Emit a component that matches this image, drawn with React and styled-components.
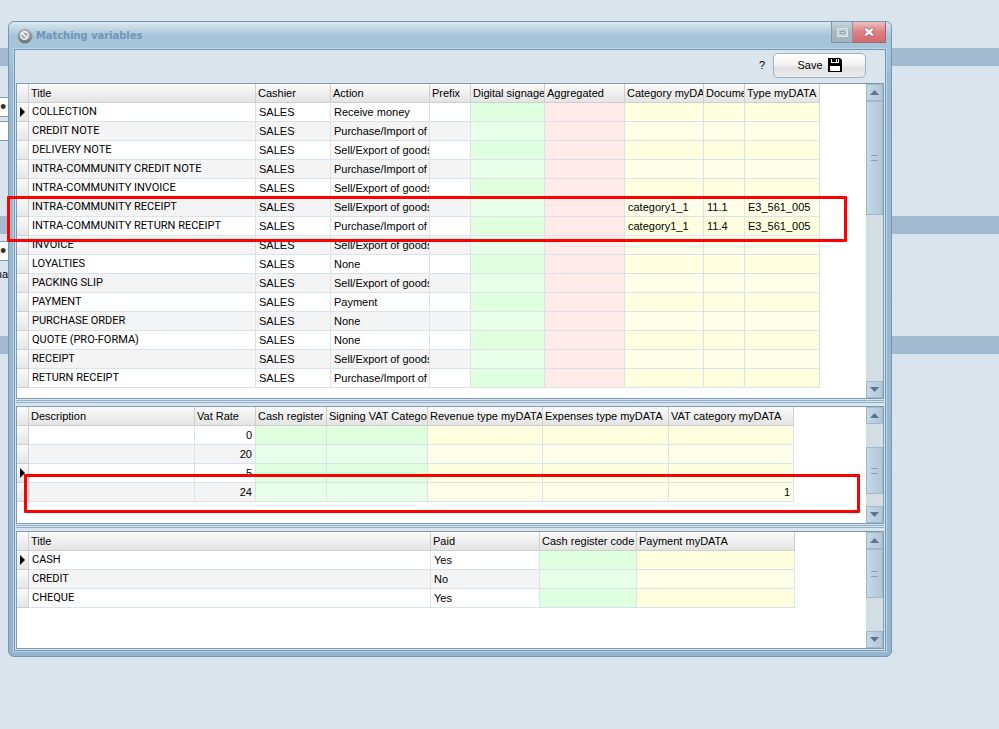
import { memo } from "react";
import styled, { createGlobalStyle, css } from "styled-components";

const c = {
  font: `"Liberation Sans", Arial, sans-serif`,
  font_title: `"DejaVu Sans Condensed", "DejaVu Sans", sans-serif`,
  font_caps: `Roboto, "Liberation Sans", sans-serif`,
  clr_page: "#dae4ec",
  clr_band: "#a2bbd1",
  clr_frame: "#9abad3",
  clr_line: "#7596b5",
  clr_pane: "#7f9cb3",
  clr_grid: "#d9e3ec",
  clr_mark: "#ff0000",
};

const tints = {
  plain: ["#ffffff", "#f4f4f4"],
  green: ["#dfffdf", "#e8ffe9"],
  red: ["#ffeaea", "#ffeaea"],
  yellow: ["#ffffdf", "#ffffe9"],
};

const GlobalStyle = createGlobalStyle`
  * {
    box-sizing: border-box;
  }

  body {
    margin: 0;
    font-family: ${c.font};
    font-size: 11px;
    line-height: 18px;
    color: #000;
    background-color: ${c.clr_page};
  }
`;

const Page = styled.div`
  display: grid;
  grid-template-columns: minmax(0, 1fr);
  min-height: 100vh;
  overflow: hidden;

  > * {
    grid-area: 1 / 1;
  }
`;

const Backdrop = styled.div`
  padding: 48px 0 0 0;
`;

const Band = styled.div`
  height: 18px;
  background-color: ${c.clr_band};
`;

const BackForm = styled.div`
  display: flex;
  flex-direction: column;
  align-items: flex-start;
  gap: 4px;
  height: ${props => props.$height}px;
  padding: ${props => props.$top}px 0 0 0;
`;

const BackInput = styled.input`
  width: 12px;
  height: 20px;
  padding: 0;
  font-family: ${c.font};
  font-size: 18px;
  color: #333;
  background-color: #fff;
  border: 1px solid ${c.clr_pane};
  border-left: none;
`;

const BackLabel = styled.span`
  display: flex;
  justify-content: flex-end;
  width: 8px;
  overflow: hidden;
`;

const Window = styled.section`
  align-self: start;
  margin: 21px 107px 0 8px;
  padding: 0 5px 5px 5px;
  background: linear-gradient(#dbe8ef 0, #a6c4d9 14px, #a4c6da 28px, ${c.clr_frame} 60px, #93b4cd 100%);
  border: 1px solid ${c.clr_line};
  border-radius: 6px;
`;

const TitleBar = styled.header`
  display: flex;
  align-items: center;
  gap: 3px;
  height: 27px;
  padding: 0 0 0 3px;

  h1 {
    margin: 0;
    font-family: ${c.font_title};
    font-size: 11px;
    font-weight: bold;
    color: #6f96ba;
  }
`;

const WindowButtons = styled.div`
  display: flex;
  align-self: flex-start;
  margin: 0 0 0 auto;
`;

const WindowButton = styled.button`
  display: flex;
  align-items: center;
  justify-content: center;
  width: 22px;
  height: 21px;
  padding: 0;
  background: linear-gradient(#c9d6dd, #a9b7bf 50%, #a4b4bc);
  border: 1px solid #8298a8;
  border-top: none;

  ${props => props.$close && css`
    width: 33px;
    background: linear-gradient(#eebfc1, #dc8082 50%, #d16a6d);
    border-color: #a8616a;
    border-left: none;
  `}
`;

const Client = styled.div`
  background-color: ${c.clr_page};
  border: 1px solid ${c.clr_line};
  outline: 1px solid #bcd3e3;
  padding: 0 1px 1px 1px;
`;

const Toolbar = styled.div`
  display: flex;
  align-items: center;
  justify-content: flex-end;
  gap: 8px;
  height: 33px;
  padding: 0 18px 3px 0;
`;

const HelpLink = styled.a`
  color: inherit;
  text-decoration: none;
`;

const SaveButton = styled.button`
  display: flex;
  align-items: center;
  justify-content: center;
  gap: 5px;
  width: 93px;
  height: 25px;
  padding: 0;
  font-family: ${c.font};
  font-size: 11px;
  background: linear-gradient(#fff 0, #f4f4f4 45%, #e0e0e0 60%, #ececec 100%);
  border: 1px solid #9bb3c6;
  border-radius: 5px;
`;

const Pane = styled.div`
  position: relative;
  display: flex;
  justify-content: space-between;
  height: ${props => props.$height}px;
  background-color: #fff;
  border: 1px solid ${c.clr_pane};
`;

const Splitter = styled.div`
  height: 7px;
  background: linear-gradient(
    #dae4ec 1px, #8fb0ca 1px 2px, #dae4ec 2px 3px, #8fb0ca 3px 4px, #dae4ec 4px
  );
`;

const Table = styled.table`
  align-self: flex-start;
  width: 0;
  table-layout: fixed;
  border-collapse: separate;
  border-spacing: 0;

  th,
  td {
    height: 19px;
    padding: 0 0 0 3px;
    overflow: hidden;
    white-space: nowrap;
    line-height: 18px;
    border-right: 1px solid ${c.clr_grid};
    border-bottom: 1px solid ${c.clr_grid};
  }

  thead th {
    padding: 0 0 0 2px;
    font-weight: normal;
    text-align: left;
    background: linear-gradient(#fafafa, #e4e4e4);
    border-color: #cfcfcf;
  }
`;

const Cell = styled.td`
  background-color: ${props => tints[props.$tint][props.$odd ? 1 : 0]};

  ${props => props.$caps && css`
    font-family: ${c.font_caps};
  `}

  ${props => props.$number && css`
    && {
      padding: 0 3px 0 0;
      text-align: right;
    }
  `}
`;

const Marker = styled.td`
  && {
    padding: 0 0 0 3px;
    background: linear-gradient(#fafafa, #e6e6e6);
    border-color: #cfcfcf;
  }

  svg {
    display: block;
  }
`;

const Scrollbar = styled.div`
  display: flex;
  flex-direction: column;
  width: 17px;
  background-color: #d3dee4;
`;

const ScrollButton = styled.button`
  display: flex;
  align-items: center;
  justify-content: center;
  flex: none;
  height: 17px;
  padding: 0;
  background: linear-gradient(to right, #c6d8e5, #afc8da);
  border: 1px solid #9fb9cb;
`;

const Thumb = styled.div`
  display: flex;
  align-items: center;
  justify-content: center;
  flex: none;
  height: ${props => props.$size}px;
  margin: ${props => props.$offset}px 0 auto 0;
  background: linear-gradient(to right, #c6d8e5, #afc8da);
  border: 1px solid #9fb9cb;

  &::before {
    content: "";
    width: 7px;
    height: 4px;
    border: solid #86a1b4;
    border-width: 1px 0;
  }
`;

const Highlight = styled.div`
  position: absolute;
  top: ${props => props.$top}px;
  right: ${props => props.$right}px;
  left: ${props => props.$left}px;
  height: ${props => props.$height}px;
  border: 3px solid ${c.clr_mark};
  border-radius: 1px;
  pointer-events: none;
`;

const BanIcon = () => (
  <svg width="16" height="16" viewBox="0 0 16 16" aria-hidden="true">
    <defs>
      <linearGradient id="ball" x1="0" y1="0" x2="0" y2="1">
        <stop offset="0" stopColor="#b5bbbd" />
        <stop offset="1" stopColor="#6c7476" />
      </linearGradient>
    </defs>
    <circle cx="8" cy="8" r="7.5" fill="url(#ball)" />
    <circle cx="7.5" cy="7.5" r="3.8" fill="#a4a9aa" stroke="#f4f4f4" strokeWidth="1.4" />
    <path d="M5 5l5 5" stroke="#f4f4f4" strokeWidth="1.6" />
  </svg>
);

const MaximizeIcon = () => (
  <svg width="11" height="9" viewBox="0 0 11 9" aria-hidden="true">
    <path d="M.5.5h10v8H.5z" fill="#c3ced4" stroke="#dfe7eb" />
    <path d="M3.5 3.5h4v2h-4z" fill="#dfe7eb" stroke="#8b9ba5" />
  </svg>
);

const CloseIcon = () => (
  <svg width="12" height="10" viewBox="0 0 12 10" aria-hidden="true">
    <path d="M1 1h3l2 2 2-2h3v1L8.500 5 11 8v1H8L6 7 4 9H1V8l2.500-3L1 2z" fill="#fff" stroke="#8d5560" strokeWidth=".7" />
  </svg>
);

const SaveIcon = () => (
  <svg width="14" height="14" viewBox="0 0 14 14" aria-hidden="true">
    <path d="M0 0h12l2 2v12H0z" fill="#000" />
    <path d="M3 1h8v4H3z" fill="#fff" />
    <path d="M4 0h4v4H4zM9 1h1v3H9z" fill="#000" />
    <path d="M2 8h10v5H2z" fill="#fff" />
  </svg>
);

const Arrow = ({ down }) => (
  <svg width="9" height="5" viewBox="0 0 9 5" aria-hidden="true">
    <path d={down ? "M0 0h9L4.500 5z" : "M0 5h9L4.500 0z"} fill="#5d7589" />
  </svg>
);

const RowArrow = () => (
  <svg width="5" height="10" viewBox="0 0 5 10" aria-label="Current row">
    <path d="M0 0l5 5-5 5z" fill="#000" />
  </svg>
);

const sell = "Sell/Export of goods";
const buy = "Purchase/Import of goods";

const documents = {
  name: "Documents",
  height: 316,
  scroll: { offset: 0, size: 114 },
  current: 0,
  columns: [
    { title: "Title", width: 227, caps: true },
    { title: "Cashier", width: 75 },
    { title: "Action", width: 99 },
    { title: "Prefix", width: 41 },
    { title: "Digital signage", width: 74, tint: "green" },
    { title: "Aggregated", width: 80, tint: "red" },
    { title: "Category myDATA", width: 79, tint: "yellow" },
    { title: "Document type", width: 41, tint: "yellow" },
    { title: "Type myDATA", width: 75, tint: "yellow" },
  ],
  rows: [
    ["COLLECTION", "SALES", "Receive money"],
    ["CREDIT NOTE", "SALES", buy],
    ["DELIVERY NOTE", "SALES", sell],
    ["INTRA-COMMUNITY CREDIT NOTE", "SALES", buy],
    ["INTRA-COMMUNITY INVOICE", "SALES", sell],
    ["INTRA-COMMUNITY RECEIPT", "SALES", sell, "", "", "", "category1_1", "11.1", "E3_561_005"],
    ["INTRA-COMMUNITY RETURN RECEIPT", "SALES", buy, "", "", "", "category1_1", "11.4", "E3_561_005"],
    ["INVOICE", "SALES", sell],
    ["LOYALTIES", "SALES", "None"],
    ["PACKING SLIP", "SALES", sell],
    ["PAYMENT", "SALES", "Payment"],
    ["PURCHASE ORDER", "SALES", "None"],
    ["QUOTE (PRO-FORMA)", "SALES", "None"],
    ["RECEIPT", "SALES", sell],
    ["RETURN RECEIPT", "SALES", buy],
  ],
};

const vatRates = {
  name: "VAT rates",
  height: 118,
  scroll: { offset: 23, size: 47 },
  current: 2,
  columns: [
    { title: "Description", width: 166 },
    { title: "Vat Rate", width: 61, number: true },
    { title: "Cash register", width: 71, tint: "green" },
    { title: "Signing VAT Category", width: 101, tint: "green" },
    { title: "Revenue type myDATA", width: 115, tint: "yellow" },
    { title: "Expenses type myDATA", width: 126, tint: "yellow" },
    { title: "VAT category myDATA", width: 125, tint: "yellow", number: true },
  ],
  rows: [
    ["", "0"],
    ["", "20"],
    ["", "5"],
    ["", "24", "", "", "", "", "1"],
  ],
};

const payments = {
  name: "Payments",
  height: 118,
  scroll: { offset: 0, size: 49 },
  current: 0,
  columns: [
    { title: "Title", width: 402, caps: true },
    { title: "Paid", width: 109 },
    { title: "Cash register code", width: 97, tint: "green" },
    { title: "Payment myDATA", width: 158, tint: "yellow" },
  ],
  rows: [
    ["CASH", "Yes"],
    ["CREDIT", "No"],
    ["CHEQUE", "Yes"],
  ],
};

const DataPane = ({ data, children }) => (
  <Pane $height={data.height}>
    <Table aria-label={data.name}>
      <colgroup>
        <col width={12} />
        {data.columns.map(col => <col key={col.title} width={col.width} />)}
      </colgroup>
      <thead>
        <tr>
          <th />
          {data.columns.map(col => <th key={col.title} scope="col">{col.title}</th>)}
        </tr>
      </thead>
      <tbody>
        {data.rows.map((row, i) => (
          <tr key={i}>
            <Marker>{i === data.current && <RowArrow />}</Marker>
            {data.columns.map((col, j) => (
              <Cell
                key={col.title}
                $tint={col.tint || "plain"}
                $odd={i % 2 === 1}
                $caps={col.caps}
                $number={col.number}
              >
                {row[j]}
              </Cell>
            ))}
          </tr>
        ))}
      </tbody>
    </Table>
    <Scrollbar>
      <ScrollButton aria-label="Scroll up"><Arrow /></ScrollButton>
      <Thumb $offset={data.scroll.offset} $size={data.scroll.size} />
      <ScrollButton aria-label="Scroll down"><Arrow down /></ScrollButton>
    </Scrollbar>
    {children}
  </Pane>
);

const App = () => (
  <>
    <GlobalStyle />
    <Page>
      <Backdrop>
        <Band />
        <BackForm $height={150} $top={31}>
          <BackInput aria-label="Code" defaultValue="•" />
          <BackInput aria-label="Name" />
        </BackForm>
        <Band />
        <BackForm $height={102} $top={7}>
          <BackInput aria-label="Series" defaultValue="•" />
          <BackLabel>ma</BackLabel>
        </BackForm>
        <Band />
      </Backdrop>

      <Window>
        <TitleBar>
          <BanIcon />
          <h1>Matching variables</h1>
          <WindowButtons>
            <WindowButton aria-label="Maximize"><MaximizeIcon /></WindowButton>
            <WindowButton $close aria-label="Close"><CloseIcon /></WindowButton>
          </WindowButtons>
        </TitleBar>
        <Client>
          <Toolbar>
            <HelpLink href="#help">?</HelpLink>
            <SaveButton>Save <SaveIcon /></SaveButton>
          </Toolbar>
          <DataPane data={documents}>
            <Highlight $top={112} $left={-10} $right={36} $height={46} />
          </DataPane>
          <Splitter />
          <DataPane data={vatRates}>
            <Highlight $top={67} $left={7} $right={23} $height={39} />
          </DataPane>
          <Splitter />
          <DataPane data={payments} />
        </Client>
      </Window>
    </Page>
  </>
);

export default memo(App);
